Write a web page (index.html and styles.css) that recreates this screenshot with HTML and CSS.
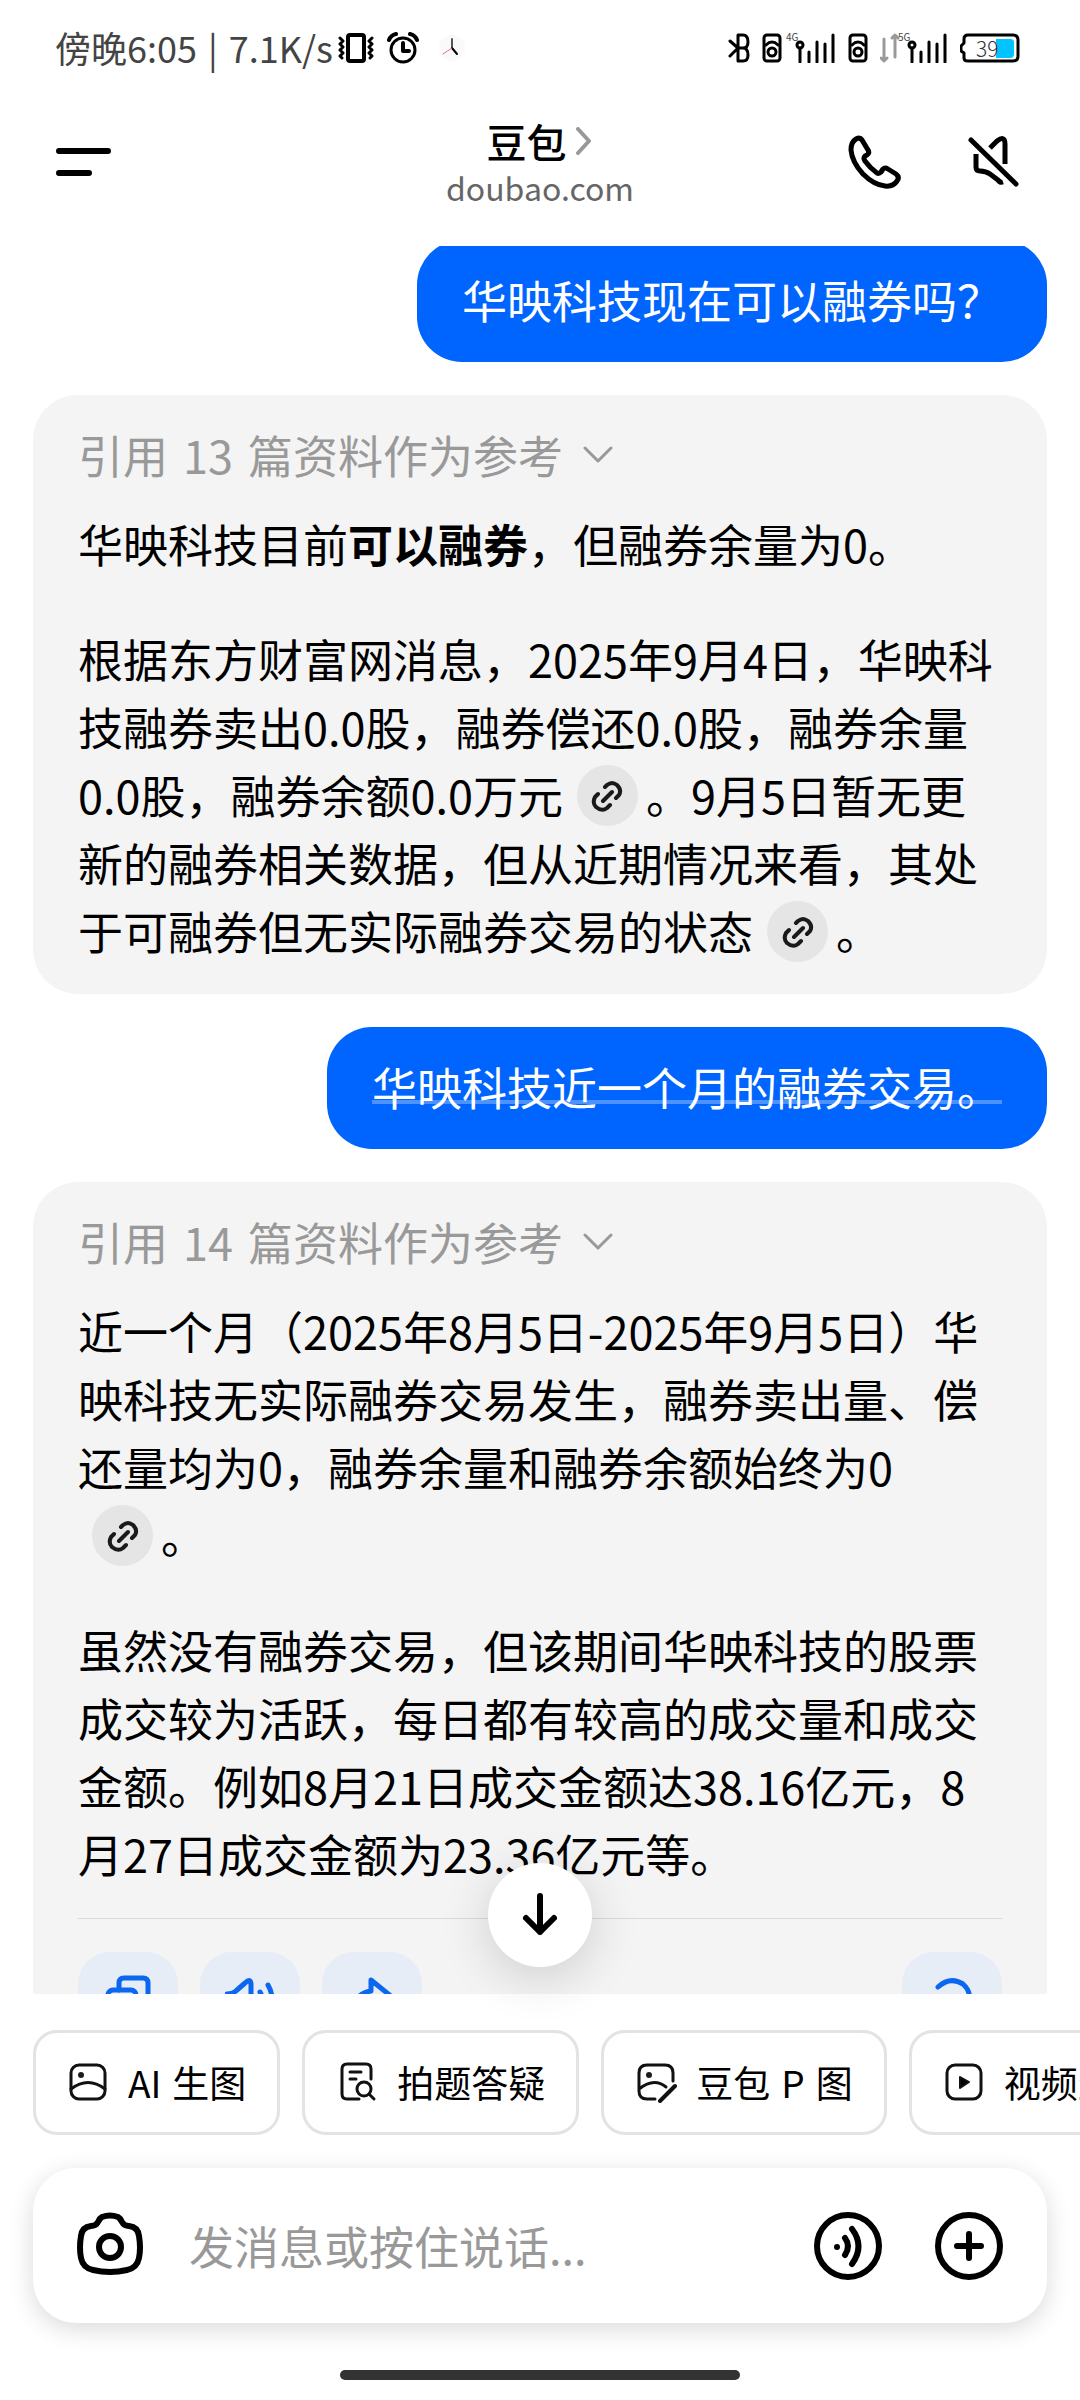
FILE: index.html
```html
<!DOCTYPE html>
<html lang="zh-CN">
<head>
    <meta charset="UTF-8">
    <meta name="viewport" content="width=device-width, initial-scale=1.0">
    <title>豆包</title>
    <link rel="stylesheet" href="styles.css">
</head>
<body>
    <!-- 复用图标 -->
    <svg class="sprite" aria-hidden="true">
        <symbol id="link" viewBox="0 0 32 32">
            <path d="M14 7 L16 5 Q21 1 26 5 Q31 10 28 15 L25 18 M7 14 L4 17 Q1 23 5 27 Q11 32 16 28 L19 25 M12 21 L21 12"/>
        </symbol>
        <symbol id="down" viewBox="0 0 30 18">
            <path d="M2 2 L15 15 L28 2"/>
        </symbol>
        <symbol id="sim" viewBox="0 0 20 30">
            <rect x="2" y="2" width="16" height="26" rx="3" stroke-width="3"/>
            <circle cx="10" cy="19" r="4" stroke-width="3"/>
            <path d="M4 12 Q10 6 16 12" stroke-width="3"/>
        </symbol>
        <symbol id="signal" viewBox="0 0 50 30">
            <circle cx="14" cy="12" r="3" stroke-width="3"/>
            <path d="M14 15 V29 M23 19 V29 M31 9 V29 M39 11 V29 M47 2 V29" stroke-width="3"/>
        </symbol>
    </svg>

    <div class="app">
        <div class="status">
            <div class="time label"><span>傍晚6:05</span><span>|</span><span>7.1K/s</span></div>
            <div class="status-left">
                <svg width="36" height="32" viewBox="0 0 36 32">
                    <rect x="10" y="3" width="16" height="26" rx="2" stroke-width="4"/>
                    <path d="M2 6 L5 9 L2 12 L5 15 L2 18 L5 21 L2 24 L4 26 M34 6 L31 9 L34 12 L31 15 L34 18 L31 21 L34 24 L32 26" stroke-width="3"/>
                </svg>
                <svg width="32" height="32" viewBox="0 0 32 32">
                    <circle cx="16" cy="18" r="12" stroke-width="3"/>
                    <path d="M16 11 V19 H22" stroke-width="4"/>
                    <path d="M2 8 Q4 3 9 2 M30 8 Q28 3 23 2" stroke-width="4"/>
                </svg>
                <svg class="clock" width="26" height="26" viewBox="0 0 26 26">
                    <circle cx="13" cy="13" r="13" fill="#fafafa" stroke="none"/>
                    <path d="M13 4 V13" stroke="#555" stroke-width="2"/>
                    <path d="M13 13 L18 19" stroke-width="2"/>
                    <path d="M13 13 L4 19" stroke="#d66" stroke-width="1" stroke-dasharray="2 1"/>
                </svg>
            </div>
            <div class="status-right">
                <svg width="22" height="30" viewBox="0 0 22 30">
                    <path d="M2 8 L10 15 M2 23 L10 15 H15 Q20 15 20 9 Q20 2 15 2 H10 V28 H15 Q20 28 20 22 Q20 15 15 15" stroke-width="3"/>
                </svg>
                <svg class="sim" width="20" height="30"><use href="#sim"/></svg>
                <span class="signal"><small>4G</small><svg width="50" height="30"><use href="#signal"/></svg></span>
                <svg class="sim" width="20" height="30"><use href="#sim"/></svg>
                <svg width="20" height="30" viewBox="0 0 20 30">
                    <path d="M4 6 V28 M1 25 L4 28 L7 25 M15 24 V2 M12 5 L15 2 L18 5" stroke="#999" stroke-width="3"/>
                </svg>
                <span class="signal near"><small>5G</small><svg width="50" height="30"><use href="#signal"/></svg></span>
                <span class="battery">
                    <svg width="60" height="30" viewBox="0 0 60 30">
                        <path d="M4 20 V25 Q4 28 8 28 H53 Q58 28 58 23 V7 Q58 2 53 2 H8 Q4 2 4 6 V10 L1 13 V18 Z" stroke-width="3"/>
                        <path d="M36 6 H50 Q54 6 54 9 V21 Q54 25 50 25 H36 Z" fill="#00c3ff" stroke="none"/>
                    </svg>
                    <span>39</span>
                </span>
            </div>
        </div>

        <header class="header">
            <button class="icon-btn" aria-label="菜单">
                <svg width="56" height="36" viewBox="0 0 56 36">
                    <path d="M3 7 H52 M3 29 H33" stroke-width="6"/>
                </svg>
            </button>
            <div class="title">
                <h1>豆包
                    <svg width="18" height="28" viewBox="0 0 18 28">
                        <path d="M3 2 L14 14 L3 26" stroke="#999" stroke-width="4"/>
                    </svg>
                </h1>
                <a href="#">doubao.com</a>
            </div>
            <div class="header-actions">
                <button class="icon-btn" aria-label="打电话">
                    <svg width="54" height="54" viewBox="0 0 54 54">
                        <path d="M14 5 L20 15 Q22 18 19 20 L17 21 Q15 23 17 26 Q22 33 29 38 Q31 39 33 37 L35 34 Q37 32 40 34 L48 39 Q52 42 49 46 Q45 52 37 51 Q26 50 15 39 Q4 27 3 15 Q3 7 8 4 Q12 2 14 5 Z" stroke-width="5"/>
                    </svg>
                </button>
                <button class="icon-btn" aria-label="静音">
                    <svg width="56" height="54" viewBox="0 0 56 54">
                        <path d="M3 5 L48 49" stroke-width="5"/>
                        <path d="M22 13 L29 6 Q37 0 37 9 V29 M8 19 V32 Q8 36 12 36 Q18 36 22 39 L30 45 Q32 48 35 47" stroke-width="5" stroke-linecap="butt"/>
                    </svg>
                </button>
            </div>
        </header>

        <main class="chat">
            <div class="messages">
                <div class="bubble">华映科技现在可以融券吗<span class="mark">？</span></div>

                <div class="answer">
                    <button class="refs"><span>引用</span><span>13</span><span>篇资料作为参考</span><svg width="30" height="18"><use href="#down"/></svg></button>
                    <p>华映科技目前<b>可以融券</b>，但融券余量为0。</p>
                    <p>根据东方财富网消息，2025年9月4日，华映科技融券卖出0.0股，融券偿还0.0股，融券余量0.0股，融券余额0.0万元<span class="cite"><a href="#" aria-label="来源"><svg width="32" height="32"><use href="#link"/></svg></a>。</span>9月5日暂无更新的融券相关数据，但从近期情况来看，其处于可融券但无实际融券交易的状态<span class="cite"><a href="#" aria-label="来源"><svg width="32" height="32"><use href="#link"/></svg></a>。</span></p>
                </div>

                <div class="bubble"><span class="underlined">华映科技近一个月的融券交易。</span></div>

                <div class="answer">
                    <button class="refs"><span>引用</span><span>14</span><span>篇资料作为参考</span><svg width="30" height="18"><use href="#down"/></svg></button>
                    <p>近一个月（2025年8月5日-2025年9月5日）华映科技无实际融券交易发生，融券卖出量、偿还量均为0，融券余量和融券余额始终为0<span class="cite"><a href="#" aria-label="来源"><svg width="32" height="32"><use href="#link"/></svg></a>。</span></p>
                    <p>虽然没有融券交易，但该期间华映科技的股票成交较为活跃，每日都有较高的成交量和成交金额。例如8月21日成交金额达38.16亿元，8月27日成交金额为23.36亿元等。</p>
                    <div class="tools">
                        <button aria-label="复制">
                            <svg width="50" height="50" viewBox="0 0 50 50">
                                <rect x="5" y="16" width="28" height="28" rx="5"/>
                                <path d="M16 16 V9 Q16 4 21 4 H40 Q45 4 45 9 V28 Q45 33 40 33 H33"/>
                            </svg>
                        </button>
                        <button aria-label="朗读">
                            <svg width="50" height="50" viewBox="0 0 50 50">
                                <path d="M2 20 Q8 20 12 16 L20 9 Q26 3 26 11 V39 Q26 47 20 41 L12 34 Q8 30 2 30 Z M35 18 Q39 25 35 32 M43 11 Q51 25 43 39"/>
                            </svg>
                        </button>
                        <button aria-label="分享">
                            <svg width="50" height="50" viewBox="0 0 50 50">
                                <path d="M24 6 L45 23 L24 40 V31 Q11 31 5 41 Q6 20 24 17 Z"/>
                            </svg>
                        </button>
                        <button aria-label="重新生成">
                            <svg width="50" height="50" viewBox="0 0 50 50">
                                <path d="M11 13 Q23 2 36 10 Q45 18 42 31 Q33 46 17 41 Q7 36 6 25 M6 25 L1 31 M6 25 L12 30"/>
                            </svg>
                        </button>
                    </div>
                </div>
            </div>
        </main>

        <footer class="dock">
            <button class="to-bottom" aria-label="滚动到底部">
                <svg width="42" height="46" viewBox="0 0 42 46">
                    <path d="M21 4 V40 M7 26 L21 40 L35 26" stroke-width="6"/>
                </svg>
            </button>

            <div class="chips">
                <button>
                    <svg width="42" height="42" viewBox="0 0 42 42">
                        <rect x="4" y="4" width="34" height="34" rx="8"/>
                        <circle cx="14" cy="14" r="3" fill="#1a1f1a" stroke="none"/>
                        <path d="M4 28 Q21 15 38 28"/>
                    </svg>
                    <span class="label"><span>AI</span><span>生图</span></span>
                </button>
                <button>
                    <svg width="42" height="42" viewBox="0 0 42 42">
                        <path d="M23 38 H11 Q6 38 6 33 V8 Q6 3 11 3 H30 Q35 3 35 8 V18 M14 11 H25 M14 18 H20"/>
                        <circle cx="28" cy="28" r="7"/>
                        <path d="M33 33 L38 38"/>
                    </svg>
                    拍题答疑
                </button>
                <button>
                    <svg width="42" height="42" viewBox="0 0 42 42">
                        <path d="M20 38 H12 Q4 38 4 30 V12 Q4 4 12 4 H30 Q38 4 38 12 V20 M4 28 Q19 16 31 26"/>
                        <circle cx="14" cy="14" r="3" fill="#1a1f1a" stroke="none"/>
                        <path d="M25 40 L40 25" stroke-width="4"/>
                    </svg>
                    <span class="label"><span>豆包</span><span>P</span><span>图</span></span>
                </button>
                <button>
                    <svg width="42" height="42" viewBox="0 0 42 42">
                        <rect x="4" y="4" width="34" height="34" rx="8"/>
                        <path d="M17 16 L26 21 L17 27 Z" fill="#000" stroke-width="2"/>
                    </svg>
                    视频生成
                </button>
            </div>

            <form class="composer">
                <button type="button" class="icon-btn" aria-label="拍照">
                    <svg width="68" height="72" viewBox="0 0 68 72">
                        <path d="M26 7 Q34 4 42 7 Q44 8 46 12 Q48 16 53 16 Q62 17 63 26 Q65 38 63 48 Q61 58 51 60 Q34 64 17 60 Q7 58 5 48 Q3 38 5 26 Q6 17 15 16 Q20 16 22 12 Q24 8 26 7 Z" stroke-width="6"/>
                        <circle cx="34" cy="37" r="11" stroke-width="6"/>
                    </svg>
                </button>
                <input type="text" placeholder="发消息或按住说话..." aria-label="发消息">
                <button type="button" class="icon-btn" aria-label="语音">
                    <svg width="70" height="72" viewBox="0 0 70 72">
                        <circle cx="35" cy="36" r="31" stroke-width="6"/>
                        <circle cx="24" cy="37" r="3" fill="#000" stroke="none"/>
                        <path d="M32 28 Q38 36 32 45 M39 19 Q52 36 39 54" stroke-width="6"/>
                    </svg>
                </button>
                <button type="button" class="icon-btn" aria-label="更多">
                    <svg width="70" height="72" viewBox="0 0 70 72">
                        <circle cx="35" cy="36" r="31" stroke-width="6"/>
                        <path d="M23 36 H47 M35 24 V48" stroke-width="6"/>
                    </svg>
                </button>
            </form>

            <div class="home-bar"></div>
        </footer>
    </div>
</body>
</html>
```
FILE: styles.css
```css
* {
    margin: 0;
    padding: 0;
    box-sizing: border-box;
}

body {
    background: #fff;
    color: #000;
    font-family: "Noto Sans CJK SC", sans-serif;
    font-size: 45px;
    line-height: 68px;
}

button {
    border: none;
    background: none;
    color: inherit;
    font: inherit;
    cursor: pointer;
}

a {
    color: inherit;
    text-decoration: none;
}

svg {
    display: block;
    flex-shrink: 0;
    fill: none;
    stroke: #000;
    stroke-linecap: round;
    stroke-linejoin: round;
}

.sprite {
    display: none;
}

.label {
    display: flex;
    gap: 11px;
}

.app {
    display: flex;
    flex-direction: column;
    height: 100vh;
    overflow: hidden;
}

/* 状态栏 */
.status {
    display: flex;
    align-items: center;
    height: 96px;
    padding: 0 60px 0 55px;
}

.time {
    padding-bottom: 2px;
    color: #444;
    font-size: 36px;
}

.status-left {
    display: flex;
    align-items: center;
    gap: 13px;
    margin-left: 5px;
}

.clock {
    margin-left: 7px;
}

.status-right {
    display: flex;
    align-items: center;
    gap: 12px;
    margin-left: auto;
}

.signal {
    position: relative;
    margin-left: -8px;
}

.signal.near {
    margin-left: -14px;
}

.signal small {
    position: absolute;
    top: -2px;
    left: 0;
    color: #444;
    font-size: 10px;
    line-height: 12px;
}

.battery {
    position: relative;
}

.battery span {
    position: absolute;
    top: 0;
    left: 16px;
    color: #333;
    font-size: 21px;
    font-weight: 300;
    line-height: 30px;
}

/* 顶部栏 */
.header {
    display: grid;
    grid-template-columns: 1fr auto 1fr;
    align-items: center;
    padding: 20px 56px 38px;
}

.icon-btn {
    display: grid;
    place-items: center;
    justify-self: start;
}

.title {
    text-align: center;
}

.title h1 {
    display: flex;
    align-items: center;
    justify-content: center;
    gap: 9px;
    font-size: 40px;
    font-weight: 500;
    line-height: 50px;
}

.title a {
    display: block;
    color: #666;
    font-size: 32px;
    line-height: 42px;
}

.header-actions {
    display: flex;
    justify-content: flex-end;
    gap: 66px;
}

/* 对话 */
.chat {
    flex: 1;
    min-height: 0;
    overflow: hidden;
    padding: 0 33px;
}

.messages {
    display: flex;
    flex-direction: column;
    gap: 33px;
    margin-top: -6px;
}

.bubble {
    align-self: flex-end;
    padding: 26px 45px 28px;
    border-radius: 45px;
    background: #0065ff;
    color: #fff;
}

/* 问号居中显示 */
.mark {
    font-family: "Noto Sans CJK TC", sans-serif;
}

.underlined {
    text-decoration: underline 4px rgba(255, 255, 255, 0.3);
    text-decoration-skip-ink: none;
    text-underline-offset: -6px;
}

.answer {
    display: flex;
    flex-direction: column;
    gap: 47px;
    padding: 26px 45px 29px;
    border-radius: 45px;
    background: #f4f4f4;
}

.refs {
    display: flex;
    align-items: center;
    gap: 15px;
    margin-bottom: -26px;
    color: #999;
}

.refs svg {
    margin-left: 5px;
    stroke: #999;
    stroke-width: 3px;
}

.cite {
    white-space: nowrap;
}

.cite a {
    display: inline-grid;
    place-items: center;
    width: 61px;
    height: 61px;
    margin: 4px 8px 3px 14px;
    border-radius: 50%;
    background: #e5e5e5;
    vertical-align: top;
}

.cite svg {
    stroke: #1a1a1a;
    stroke-width: 4px;
}

.tools {
    display: flex;
    gap: 22px;
    margin-top: -17px;
    padding-top: 33px;
    border-top: 1px solid #d9d9d9;
}

.tools button {
    display: grid;
    place-items: center;
    width: 100px;
    height: 94px;
    border-radius: 32px;
    background: #e6edf6;
}

.tools button:last-child {
    margin-left: auto;
}

.tools svg {
    stroke: #0b66f0;
    stroke-width: 5px;
}

/* 底部 */
.dock {
    position: relative;
    padding: 36px 33px 20px;
}

.to-bottom {
    position: absolute;
    bottom: calc(100% + 27px);
    left: calc(50% - 52px);
    display: grid;
    place-items: center;
    width: 104px;
    height: 104px;
    border-radius: 50%;
    background: #fff;
    box-shadow: 0 10px 50px rgba(0, 0, 0, 0.16);
}

.chips {
    display: flex;
    gap: 22px;
    margin-right: -33px;
    overflow: hidden;
}

.chips button {
    display: flex;
    flex-shrink: 0;
    align-items: center;
    gap: 19px;
    height: 105px;
    padding: 0 31px 2px;
    border: 3px solid #e3e3e3;
    border-radius: 24px;
    font-size: 37px;
    white-space: nowrap;
}

.chips svg {
    stroke: #111;
    stroke-width: 3px;
}

.composer {
    display: flex;
    align-items: center;
    gap: 51px;
    margin-top: 33px;
    padding: 42px 43px 41px;
    border-radius: 43px;
    background: #fff;
    box-shadow: 0 6px 24px rgba(0, 0, 0, 0.15);
}

.composer input {
    flex: 1;
    min-width: 0;
    margin-left: -6px;
    border: none;
    outline: none;
    background: none;
    font: inherit;
}

.composer input::placeholder {
    color: #999;
    opacity: 1;
}

.home-bar {
    width: 400px;
    height: 10px;
    margin: 47px auto 0;
    border-radius: 5px;
    background: #333;
}
```
